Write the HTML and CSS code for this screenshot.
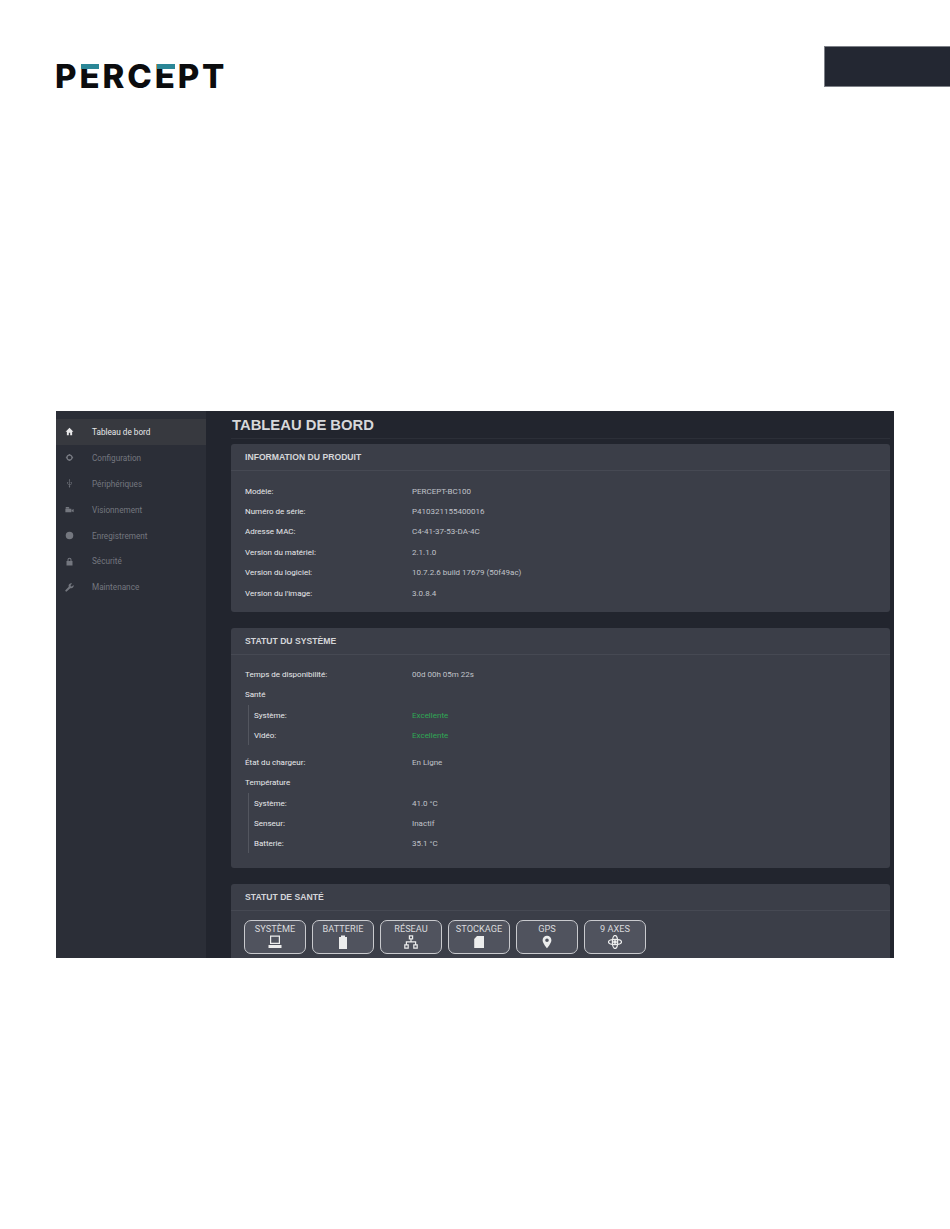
FILE: index.html
```html
<!DOCTYPE html>
<html lang="fr">
<head>
    <meta charset="UTF-8">
    <title>Percept - Tableau de bord</title>
    <link rel="stylesheet" href="styles.css">
</head>
<body>
    <div class="page-header">
        <div class="logo">P<span class="logo-e">E</span>RC<span class="logo-e">E</span>PT</div>
        <div class="header-tab"></div>
    </div>

    <div class="screen">
        <!-- Sidebar -->
        <div class="sidebar">
            <div class="nav-item active">
                <svg class="nav-icon" viewBox="0 0 12 12"><path d="M6 1 .8 6.200h1.700V11h2.600V7.800h1.800V11h2.600V6.200h1.700z"/></svg>
                Tableau de bord
            </div>
            <div class="nav-item">
                <svg class="nav-icon" viewBox="0 0 12 12"><circle cx="6" cy="6" r="3.300" fill="none" stroke="currentColor" stroke-width="1.700"/><path d="M5 1.200h2v1.400H5zM5 9.400h2v1.400H5zM1.200 5h1.400v2H1.200zM9.400 5h1.400v2H9.400z"/></svg>
                Configuration
            </div>
            <div class="nav-item">
                <svg class="nav-icon" viewBox="0 0 12 12"><path d="M6 0 7 1.800H6.400V7.500L8 6.500V5.400H7.500V4.200h1.600v1.200h-.4v1.500L6.400 8.500v1.300h.3a.9.9 0 1 1-1.400 0h.3V8.100L3.300 6.600V5.500a.7.700 0 1 1 .7 0v.8l1.600 1V1.800H5z"/></svg>
                Périphériques
            </div>
            <div class="nav-item">
                <svg class="nav-icon" viewBox="0 0 12 12"><path d="M.5 5h8v4.800h-8zM9 6.600l2.500-1.400v4.400L9 8.200zM1 2.500h3.500a1.200 1.200 0 0 1 1.200 1.200V4.600H1z"/></svg>
                Visionnement
            </div>
            <div class="nav-item">
                <svg class="nav-icon" viewBox="0 0 12 12"><circle cx="6" cy="6" r="5"/></svg>
                Enregistrement
            </div>
            <div class="nav-item">
                <svg class="nav-icon" viewBox="0 0 12 12"><path d="M2 5.200h8v6H2zM3.300 5.200V3.700a2.700 2.700 0 0 1 5.400 0v1.500H7.300V3.700a1.300 1.300 0 0 0-2.600 0v1.500z"/></svg>
                Sécurité
            </div>
            <div class="nav-item">
                <svg class="nav-icon" viewBox="0 0 12 12"><path d="M11.200 2.500 9.200 4.500 7.700 4.300 7.500 2.800 9.500.8A3.300 3.300 0 0 0 5 4.900L.8 9.300a1.200 1.200 0 0 0 1.800 1.800L7 6.900a3.300 3.300 0 0 0 4.200-4.400z"/></svg>
                Maintenance
            </div>
        </div>

        <div class="content">
            <h1 class="page-title">TABLEAU DE BORD</h1>

            <div class="panel">
                <div class="panel-heading">INFORMATION DU PRODUIT</div>
                <div class="panel-body product-body">
                    <div class="row"><span class="label">Modèle:</span><span class="value">PERCEPT-BC100</span></div>
                    <div class="row"><span class="label">Numéro de série:</span><span class="value">P410321155400016</span></div>
                    <div class="row"><span class="label">Adresse MAC:</span><span class="value">C4-41-37-53-DA-4C</span></div>
                    <div class="row"><span class="label">Version du matériel:</span><span class="value">2.1.1.0</span></div>
                    <div class="row"><span class="label">Version du logiciel:</span><span class="value">10.7.2.6 build 17679 (50f49ac)</span></div>
                    <div class="row"><span class="label">Version du l'image:</span><span class="value">3.0.8.4</span></div>
                </div>
            </div>

            <div class="panel">
                <div class="panel-heading">STATUT DU SYSTÈME</div>
                <div class="panel-body status-body">
                    <div class="row"><span class="label">Temps de disponibilité:</span><span class="value">00d 00h 05m 22s</span></div>
                    <div class="row"><span class="label">Santé</span></div>
                    <div class="sub-rows">
                        <div class="row"><span class="label">Système:</span><span class="value ok">Excellente</span></div>
                        <div class="row"><span class="label">Vidéo:</span><span class="value ok">Excellente</span></div>
                    </div>
                    <div class="row"><span class="label">État du chargeur:</span><span class="value">En Ligne</span></div>
                    <div class="row"><span class="label">Température</span></div>
                    <div class="sub-rows">
                        <div class="row"><span class="label">Système:</span><span class="value">41.0 °C</span></div>
                        <div class="row"><span class="label">Senseur:</span><span class="value">Inactif</span></div>
                        <div class="row"><span class="label">Batterie:</span><span class="value">35.1 °C</span></div>
                    </div>
                </div>
            </div>

            <div class="panel">
                <div class="panel-heading">STATUT DE SANTÉ</div>
                <div class="health-buttons">
                    <div class="health-btn">SYSTÈME
                        <svg class="health-icon" viewBox="0 0 14 14"><path d="M2 .5h10v8.500H2zM3.200 1.700v6.100h7.600V1.700zM.5 10h13v3H.5z" fill-rule="evenodd"/></svg>
                    </div>
                    <div class="health-btn">BATTERIE
                        <svg class="health-icon" viewBox="0 0 14 14"><path d="M5 .5h4v1.500h2v12H3V2h2z"/></svg>
                    </div>
                    <div class="health-btn">RÉSEAU
                        <svg class="health-icon" viewBox="0 0 14 14"><path d="M4.800 .2h4.400v4.300H7.600V6.200h4.600V9.300h1.600v4.500H9.200V9.300h1.800V7.400H3V9.300h1.800v4.500H.2V9.300h1.600V6.200h4.600V4.500H4.800zM6 1.400v1.900h2V1.400zM1.400 10.500v2.100h2.200v-2.100zM10.400 10.500v2.100h2.200v-2.100z" fill-rule="evenodd"/></svg>
                    </div>
                    <div class="health-btn">STOCKAGE
                        <svg class="health-icon" viewBox="0 0 14 14"><path d="M5 1h7v12H2.200V4z"/></svg>
                    </div>
                    <div class="health-btn">GPS
                        <svg class="health-icon" viewBox="0 0 14 14"><path d="M7 .8a4.400 4.400 0 0 0-4.400 4.400C2.600 8.200 7 13.200 7 13.200s4.400-5 4.400-8A4.400 4.400 0 0 0 7 .8zm0 6.200a1.800 1.800 0 1 1 0-3.600 1.800 1.800 0 0 1 0 3.600z" fill-rule="evenodd"/></svg>
                    </div>
                    <div class="health-btn">9 AXES
                        <svg class="health-icon" viewBox="0 0 14 14"><g fill="none" stroke="currentColor" stroke-width="1.300"><ellipse cx="7" cy="7" rx="6.500" ry="2.600"/><ellipse cx="7" cy="7" rx="2.600" ry="6.500"/></g><path d="M7 4.800 9.200 7 7 9.200 4.800 7z"/></svg>
                    </div>
                </div>
            </div>
        </div>
    </div>
</body>
</html>
```

FILE: styles.css
```css
/* General Styles */
* {
    margin: 0;
    padding: 0;
    box-sizing: border-box;
}

body {
    font-family: Roboto, "Liberation Sans", Arial, sans-serif;
    background: #fff;
    height: 1229px;
    overflow: hidden;
}

/* Page header */
.page-header {
    display: flex;
    justify-content: space-between;
    height: 411px;
    padding: 46px 0 0 55px;
}

.logo {
    margin-top: 12px;
    height: 36px;
    font-family: Inter, "Liberation Sans", sans-serif;
    font-size: 33px;
    line-height: 36px;
    font-weight: 800;
    letter-spacing: 2.900px;
    color: #0b0c0e;
}

.logo-e {
    position: relative;
}

.logo-e::before {
    content: "";
    position: absolute;
    left: 2px;
    right: 3px;
    top: 8px;
    height: 5px;
    background: #2b8797;
}

.header-tab {
    width: 126px;
    height: 41px;
    background: #232732;
    border: 1px solid #7d8087;
    border-right: none;
}

/* Screenshot area */
.screen {
    display: flex;
    width: 838px;
    height: 547px;
    margin-left: 56px;
    overflow: hidden;
    background: #22252e;
}

/* Sidebar */
.sidebar {
    width: 150px;
    flex-shrink: 0;
    padding-top: 8px;
    background: #2b2e37;
}

.nav-item {
    display: flex;
    align-items: center;
    height: 25.900px;
    padding-left: 9px;
    font-size: 8.200px;
    color: #74777f;
}

.nav-item.active {
    background: #37393f;
    color: #e9e9ea;
}

.nav-icon {
    width: 9px;
    height: 9px;
    margin-right: 18px;
    fill: currentColor;
}

/* Content */
.content {
    flex: 1;
    padding: 5px 4px 0 25px;
}

.page-title {
    height: 23px;
    padding-left: 1px;
    font-family: "Liberation Sans", Arial, sans-serif;
    font-size: 14.800px;
    line-height: 18px;
    font-weight: 700;
    color: #d7d8da;
    border-bottom: 1px solid #2c2f38;
    margin-bottom: 5px;
}

.panel {
    background: #3b3e48;
    border-radius: 3px;
    margin-bottom: 16px;
}

.panel-heading {
    height: 27px;
    padding-left: 14px;
    font-family: "Liberation Sans", Arial, sans-serif;
    font-size: 8.650px;
    line-height: 26px;
    font-weight: 700;
    color: #d5d6d9;
    border-bottom: 1px solid #464953;
}

.panel-body {
    padding-left: 14px;
}

.product-body {
    padding-top: 10px;
    height: 141px;
}

.status-body {
    padding-top: 9px;
    height: 213px;
}

.row {
    display: flex;
    align-items: center;
    height: 20.400px;
    font-size: 8px;
}

.label {
    width: 167px;
    color: #e8e9eb;
}

.value {
    color: #c0c3ca;
}

.value.ok {
    color: #2fa855;
}

.sub-rows {
    margin: .4px 0 6.600px 3px;
    padding-left: 5px;
    border-left: 1px solid #53565f;
}

.sub-rows .row {
    height: 20.100px;
}

.sub-rows .label {
    width: 158px;
}

/* Health buttons */
.health-buttons {
    display: flex;
    gap: 6px;
    padding: 9px 13px;
}

.health-btn {
    display: flex;
    flex-direction: column;
    align-items: center;
    width: 62px;
    height: 34px;
    padding-top: 3px;
    font-size: 9.200px;
    line-height: 10px;
    color: #d9dadd;
    background: #50535e;
    border: 1px solid #c9cace;
    border-radius: 7px;
}

.health-icon {
    width: 14px;
    height: 14px;
    margin-top: 1px;
    fill: #eceded;
    color: #eceded;
}
```
